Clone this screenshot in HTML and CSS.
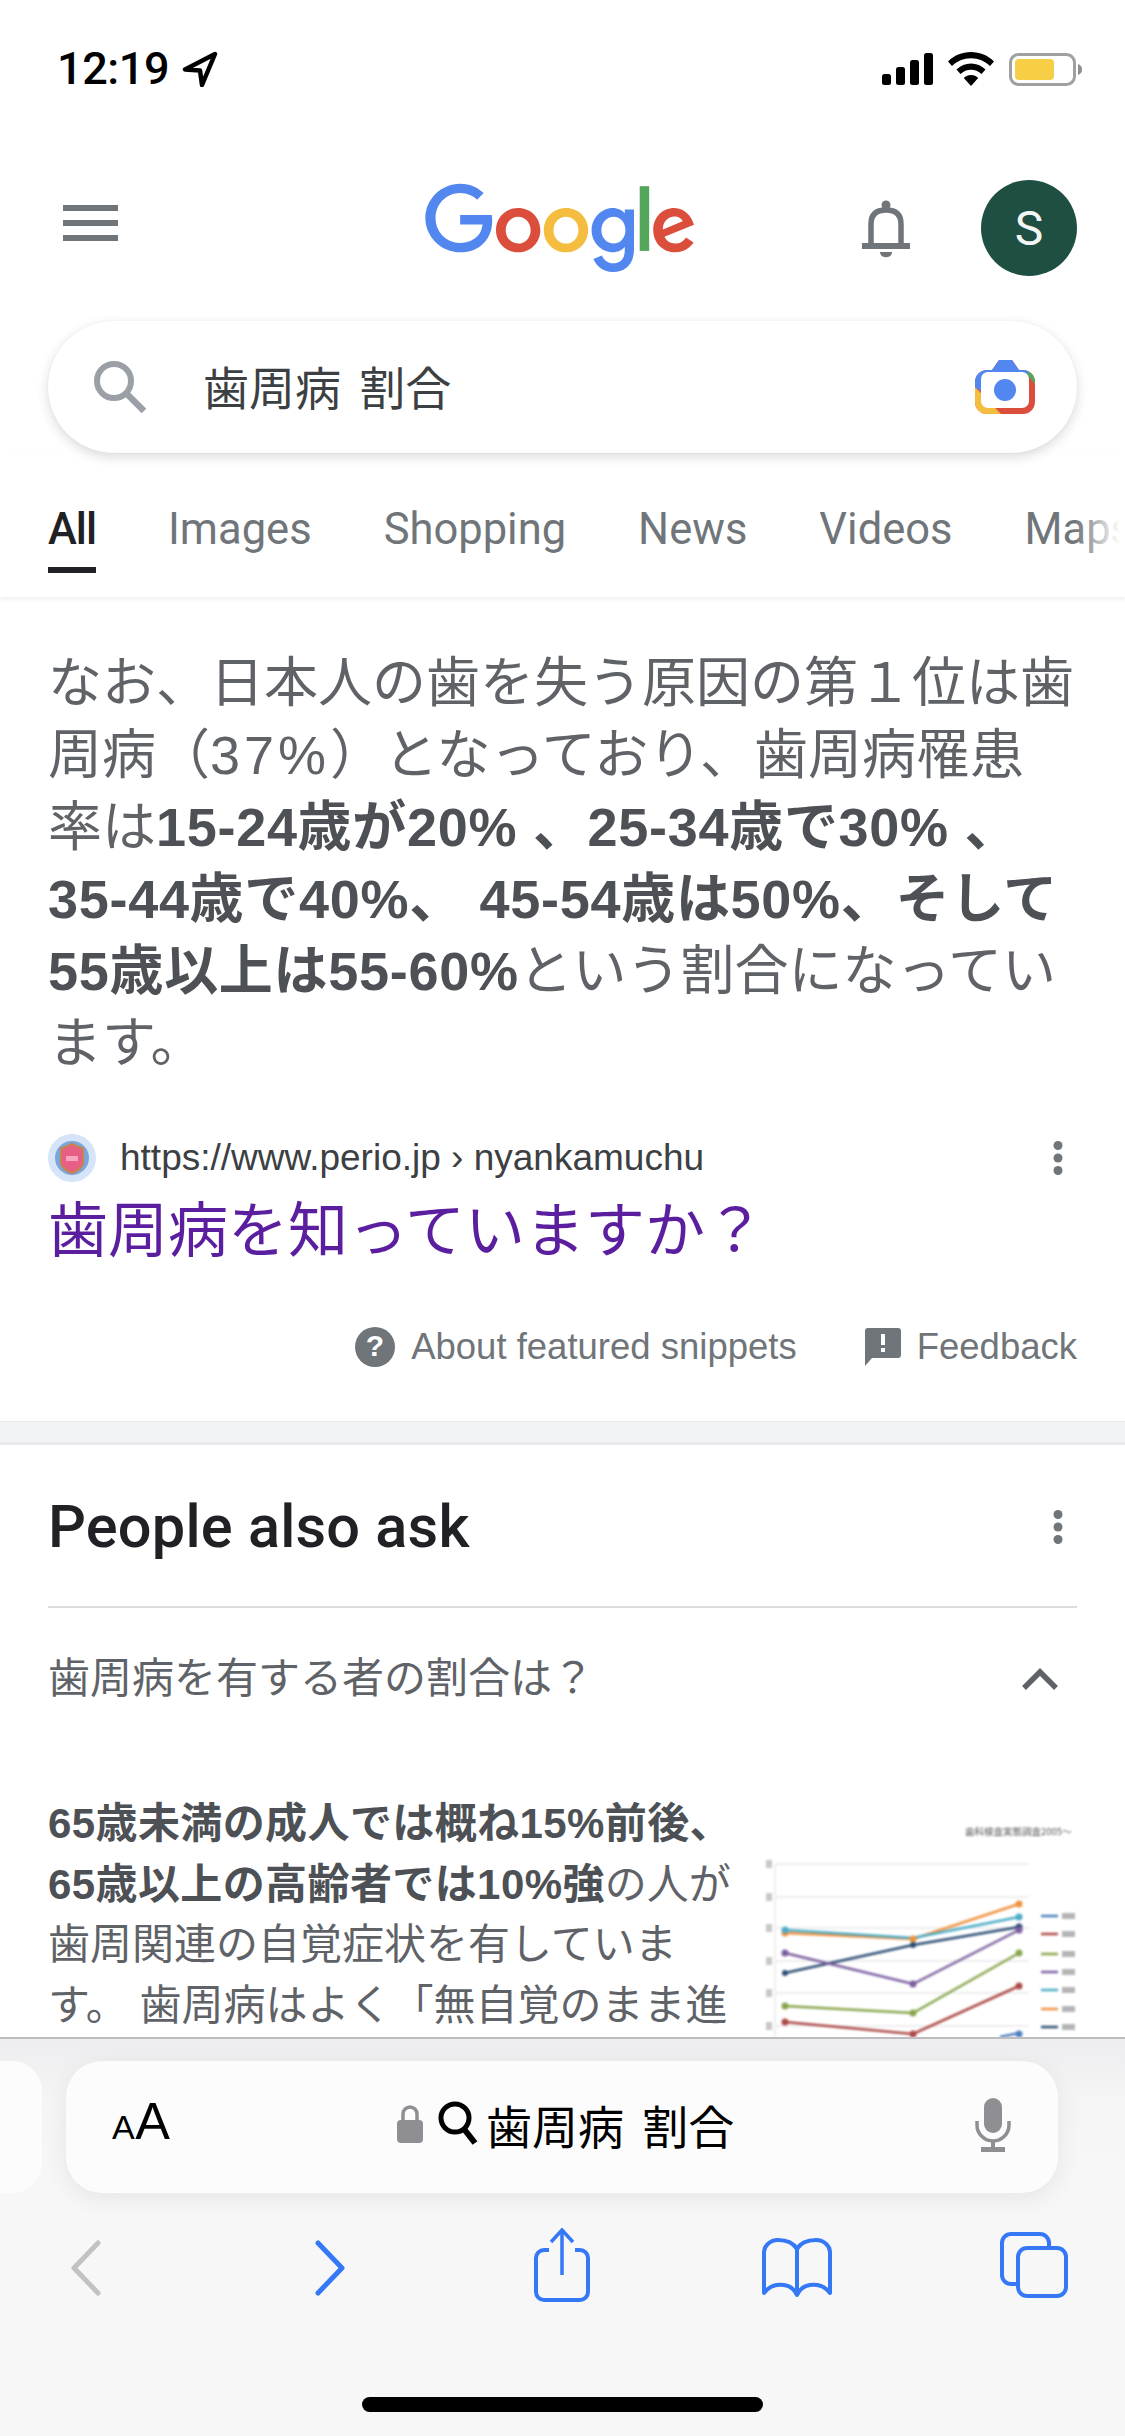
FILE: index.html
```html
<!DOCTYPE html>
<html lang="ja">
<head>
<meta charset="utf-8">
<title>歯周病 割合 - Google Search</title>
<link rel="stylesheet" href="styles.css">
</head>
<body>
<div class="page">
  <main class="main">
    <div class="status">
      <div class="status-left">
        <span class="time">12:19</span>
        <svg class="loc" viewBox="0 0 36 36"><path d="M33 3 L3 18.5 L18 19.5 L20 34 Z" fill="none" stroke="#000" stroke-width="4.5" stroke-linejoin="round"/></svg>
      </div>
      <div class="status-right">
        <svg class="signal" viewBox="0 0 51 32"><rect x="0" y="21" width="9" height="11" rx="2.5"/><rect x="14" y="14" width="9" height="18" rx="2.5"/><rect x="28" y="7" width="9" height="25" rx="2.5"/><rect x="42" y="0" width="9" height="32" rx="2.5"/></svg>
        <svg class="wifi" viewBox="0 0 46 34"><path d="M23 0 C32 0 40 3.500 46 9.500 L42 14 C37 9 30.500 6.200 23 6.200 C15.500 6.200 9 9 4 14 L0 9.500 C6 3.500 14 0 23 0 Z"/><path d="M23 11.500 C28.500 11.500 33.500 13.500 37.500 17.500 L33.500 22 C30.500 19.300 27 17.800 23 17.800 C19 17.800 15.500 19.300 12.500 22 L8.500 17.500 C12.500 13.500 17.500 11.500 23 11.500 Z"/><path d="M23 23 C25.800 23 28.300 24 30.200 25.900 L23 34 L15.800 25.900 C17.700 24 20.200 23 23 23 Z"/></svg>
        <svg class="battery" viewBox="0 0 73 33"><rect x="1.500" y="1.500" width="64" height="30" rx="8" fill="none" stroke="#a0a0a0" stroke-width="3"/><rect x="6" y="6" width="39" height="21" rx="4" fill="#f7cf47"/><path d="M69 11 C72 12 73 14 73 16.500 C73 19 72 21 69 22 Z" fill="#8e8e8e"/></svg>
      </div>
    </div>

    <header class="header">
      <div class="burger"><i></i><i></i><i></i></div>
      <svg class="logo" viewBox="0 0 272 92">
        <path fill="#DB4E3C" d="M115.75 47.18c0 12.77-9.99 22.18-22.25 22.18s-22.25-9.41-22.25-22.18C71.25 34.32 81.24 25 93.5 25s22.25 9.32 22.25 22.18zm-9.74 0c0-7.98-5.79-13.44-12.51-13.44S80.99 39.2 80.99 47.18c0 7.9 5.79 13.44 12.51 13.44s12.51-5.55 12.51-13.44z"/>
        <path fill="#F4BD3F" d="M163.75 47.18c0 12.77-9.99 22.18-22.25 22.18s-22.25-9.41-22.25-22.18c0-12.85 9.99-22.18 22.25-22.18s22.25 9.32 22.25 22.18zm-9.74 0c0-7.98-5.79-13.44-12.51-13.44s-12.51 5.46-12.51 13.44c0 7.9 5.79 13.44 12.51 13.44s12.51-5.55 12.51-13.44z"/>
        <path fill="#5287EF" d="M209.75 26.34v39.82c0 16.38-9.66 23.07-21.08 23.07-10.75 0-17.22-7.19-19.66-13.07l8.48-3.53c1.51 3.61 5.21 7.87 11.17 7.87 7.31 0 11.84-4.51 11.84-13v-3.19h-.34c-2.18 2.69-6.38 5.04-11.68 5.04-11.09 0-21.25-9.66-21.25-22.09 0-12.52 10.16-22.26 21.25-22.26 5.29 0 9.49 2.35 11.68 4.96h.34v-3.61h9.25zm-8.56 20.92c0-7.81-5.21-13.52-11.84-13.52-6.72 0-12.35 5.71-12.35 13.52 0 7.73 5.63 13.36 12.35 13.36 6.63 0 11.84-5.63 11.84-13.36z"/>
        <path fill="#55A65D" d="M225 3v65h-9.500V3h9.500z"/>
        <path fill="#DB4E3C" d="M262.02 54.48l7.56 5.04c-2.44 3.61-8.32 9.83-18.48 9.83-12.6 0-22.01-9.74-22.01-22.18 0-13.19 9.49-22.18 20.92-22.18 11.51 0 17.14 9.16 18.98 14.11l1.01 2.52-29.65 12.28c2.27 4.45 5.8 6.72 10.75 6.72 4.96 0 8.4-2.44 10.92-6.14zm-23.27-7.98l19.82-8.23c-1.09-2.77-4.37-4.7-8.23-4.7-4.95 0-11.84 4.37-11.59 12.93z"/>
        <path fill="#5287EF" d="M35.29 41.41V32H67c.31 1.64.47 3.58.47 5.68 0 7.06-1.93 15.79-8.15 22.01-6.05 6.3-13.78 9.66-24.02 9.66C16.32 69.35.36 53.89.36 34.91.36 15.93 16.32.47 35.3.47c10.5 0 17.98 4.12 23.6 9.49l-6.64 6.64c-4.03-3.78-9.49-6.72-16.97-6.72-13.86 0-24.7 11.17-24.7 25.03 0 13.86 10.84 25.03 24.7 25.03 8.99 0 14.11-3.61 17.39-6.89 2.66-2.66 4.41-6.46 5.1-11.65l-22.49.01z"/>
      </svg>
      <svg class="bell" viewBox="0 0 50 58"><circle cx="25" cy="5" r="4.500" fill="#70757a"/><path d="M10 43 V24 C10 14 16 10 25 10 C34 10 40 14 40 24 V43" fill="none" stroke="#70757a" stroke-width="5.500"/><rect x="1" y="43" width="48" height="6" fill="#70757a"/><path d="M19 52 H31 C31 59 19 59 19 52 Z" fill="#70757a"/></svg>
      <div class="avatar">S</div>
    </header>

    <div class="searchbar">
      <svg class="search-icon" viewBox="0 0 54 54"><circle cx="21" cy="21" r="17" fill="none" stroke="#9aa0a6" stroke-width="6"/><path d="M33 33 L51 51" stroke="#9aa0a6" stroke-width="6.500"/></svg>
      <span class="query">歯周病 割合</span>
      <svg class="camera" viewBox="0 0 60 54">
        <defs><clipPath id="cam"><path d="M12 10 H17 L24 0 H37 L44 10 H48 A12 12 0 0 1 60 22 V42 A12 12 0 0 1 48 54 H12 A12 12 0 0 1 0 42 V22 A12 12 0 0 1 12 10 Z"/></clipPath></defs>
        <g clip-path="url(#cam)">
          <rect x="0" y="0" width="60" height="54" fill="#DB4E3C"/>
          <path d="M0 27 L26 54 H0 Z" fill="#F4BD3F"/>
          <path d="M44 6 H60 V24 Z" fill="#55A65D"/>
          <path d="M0 0 H44 L54 14 H8 V33 L0 27 Z" fill="#5287EF"/>
        </g>
        <rect x="6" y="12" width="48" height="36" rx="7" fill="#fff"/>
        <circle cx="30" cy="30" r="11" fill="#5287EF"/>
      </svg>
    </div>

    <nav class="tabs">
      <span class="tab tab-active">All</span>
      <span class="tab">Images</span>
      <span class="tab">Shopping</span>
      <span class="tab">News</span>
      <span class="tab">Videos</span>
      <span class="tab">Maps</span>
    </nav>

    <p class="snippet">なお、日本人の歯を失う原因の第１位は歯<br>周病（<span class="pct">37%</span>）となっており、歯周病罹患<br>率は<b>15-24歳が20% 、25-34歳で30% 、<br>35-44歳で40%、 45-54歳は50%、そして<br>55歳以上は55-60%</b>という割合になってい<br>ます。</p>

    <div class="source">
      <svg class="favicon" viewBox="0 0 48 48">
        <circle cx="24" cy="24" r="24" fill="#d5e4f8"/>
        <circle cx="24" cy="24" r="17" fill="#7aa6da"/>
        <path d="M12 14 L24 9 L36 14 V28 C36 34 30 38 24 40 C18 38 12 34 12 28 Z" fill="#c8814f"/>
        <path d="M14 16 L24 11 L34 16 V28 C34 32 28 36 24 38 C20 36 14 32 14 28 Z" fill="#e85f86"/>
        <path d="M18 22 H30 V27 H18 Z" fill="#f3a6bd"/>
      </svg>
      <span class="url">https://www.perio.jp › nyankamuchu</span>
      <svg class="dots" viewBox="0 0 10 34"><circle cx="5" cy="4.500" r="4.500"/><circle cx="5" cy="17" r="4.500"/><circle cx="5" cy="29.500" r="4.500"/></svg>
    </div>
    <h3 class="result-title">歯周病を知っていますか？</h3>

    <div class="snippet-foot">
      <svg class="foot-q" viewBox="0 0 40 40"><circle cx="20" cy="20" r="20" fill="#70757a"/><text x="20" y="29" text-anchor="middle" class="foot-q-mark">?</text></svg>
      <span class="foot-text">About featured snippets</span>
      <svg class="foot-f" viewBox="0 0 36 38"><path d="M3 0 H33 A3 3 0 0 1 36 3 V27 A3 3 0 0 1 33 30 H7 L0 38 V3 A3 3 0 0 1 3 0 Z" fill="#70757a"/><rect x="16" y="6" width="4" height="11" fill="#fff"/><rect x="16" y="20" width="4" height="4" fill="#fff"/></svg>
      <span class="foot-text">Feedback</span>
    </div>

    <div class="band"></div>

    <section class="paa">
      <div class="paa-head">
        <h2 class="paa-title">People also ask</h2>
        <svg class="dots" viewBox="0 0 10 34"><circle cx="5" cy="4.500" r="4.500"/><circle cx="5" cy="17" r="4.500"/><circle cx="5" cy="29.500" r="4.500"/></svg>
      </div>
      <div class="paa-rule"></div>
      <div class="question">
        <span>歯周病を有する者の割合は？</span>
        <svg class="chev" viewBox="0 0 36 24"><path d="M2 21 L18 5 L34 21" fill="none" stroke="#5f6368" stroke-width="5.500"/></svg>
      </div>
      <div class="answer">
        <p class="answer-text"><b>65歳未満の成人では概ね15%前後、<br>65歳以上の高齢者では10%強</b>の人が<br>歯周関連の自覚症状を有していま<br>す。 歯周病はよく「無自覚のまま進</p>
        <svg class="chart" viewBox="763 1793 317 244">
          <g class="blur">
            <text x="965" y="1835" class="chart-title">歯科検査実態調査2005～</text>
            <g stroke="#eeeeee" stroke-width="2"><path d="M775 1864H1029M775 1897H1029M775 1928H1029M775 1961H1029M775 1993H1029M775 2026H1029M775 1864V2037"/></g>
            <g fill="#c8c8c8"><rect x="766" y="1860" width="6" height="8"/><rect x="766" y="1893" width="6" height="8"/><rect x="766" y="1924" width="6" height="8"/><rect x="766" y="1957" width="6" height="8"/><rect x="766" y="1989" width="6" height="8"/><rect x="766" y="2022" width="6" height="8"/></g>
            <g fill="none" stroke-width="2.500">
              <path d="M785 1933L913 1939L1019 1904" stroke="#f0913f"/>
              <path d="M785 1930L913 1938L1019 1917" stroke="#4bacc6"/>
              <path d="M785 1973L913 1945L1019 1927" stroke="#2c4d75"/>
              <path d="M785 1953L913 1984L1019 1930" stroke="#7d5fa0"/>
              <path d="M785 2006L913 2013L1019 1953" stroke="#89a64e"/>
              <path d="M785 2022L913 2034L1019 1986" stroke="#ad4a47"/>
              <path d="M1000 2037L1019 2033" stroke="#4f81bd"/>
              <path d="M1041 1916h17" stroke="#4f81bd"/><path d="M1041 1934h17" stroke="#ad4a47"/><path d="M1041 1954h17" stroke="#89a64e"/><path d="M1041 1972h17" stroke="#7d5fa0"/><path d="M1041 1990h17" stroke="#4bacc6"/><path d="M1041 2009h17" stroke="#f0913f"/><path d="M1041 2027h17" stroke="#2c4d75"/>
            </g>
            <g fill="#b4b4b4"><rect x="1062" y="1913" width="13" height="6"/><rect x="1062" y="1931" width="13" height="6"/><rect x="1062" y="1951" width="13" height="6"/><rect x="1062" y="1969" width="13" height="6"/><rect x="1062" y="1987" width="13" height="6"/><rect x="1062" y="2006" width="13" height="6"/><rect x="1062" y="2024" width="13" height="6"/></g>
            <g><circle cx="785" cy="1933" r="3.500" fill="#f0913f"/><circle cx="913" cy="1939" r="3.500" fill="#f0913f"/><circle cx="1019" cy="1904" r="3.500" fill="#f0913f"/><circle cx="1019" cy="1917" r="3.500" fill="#4bacc6"/><circle cx="785" cy="1930" r="3.500" fill="#4bacc6"/><circle cx="1019" cy="1927" r="3.500" fill="#2c4d75"/><circle cx="913" cy="1945" r="3" fill="#2c4d75"/><circle cx="785" cy="1973" r="3" fill="#2c4d75"/><circle cx="785" cy="1953" r="3.500" fill="#7d5fa0"/><circle cx="913" cy="1984" r="3.500" fill="#7d5fa0"/><circle cx="1019" cy="1930" r="3.500" fill="#7d5fa0"/><circle cx="785" cy="2006" r="3.500" fill="#89a64e"/><circle cx="913" cy="2013" r="3.500" fill="#89a64e"/><circle cx="1019" cy="1953" r="3.500" fill="#89a64e"/><circle cx="785" cy="2022" r="3.500" fill="#ad4a47"/><circle cx="913" cy="2034" r="3.500" fill="#ad4a47"/><circle cx="1019" cy="1986" r="3.500" fill="#ad4a47"/><circle cx="1019" cy="2034" r="3.500" fill="#4f81bd"/></g>
          </g>
        </svg>
      </div>
    </section>
  </main>

  <footer class="safari">
    <div class="address-row">
      <div class="prev-field"></div>
      <div class="address">
        <span class="aa"><small>A</small>A</span>
        <div class="addr-center">
          <svg class="lock" viewBox="0 0 26 38"><path d="M6 16 V9 A7 7 0 0 1 20 9 V16" fill="none" stroke="#8e8e93" stroke-width="3.500"/><rect x="0" y="15" width="26" height="23" rx="4" fill="#8e8e93"/></svg>
          <svg class="mag" viewBox="0 0 40 44"><circle cx="17" cy="17" r="14" fill="none" stroke="#000" stroke-width="5"/><path d="M26 28 L37 42" stroke="#000" stroke-width="6"/></svg>
          <span class="addr-text">歯周病 割合</span>
        </div>
        <svg class="mic" viewBox="0 0 36 54"><rect x="9" y="0" width="18" height="35" rx="9" fill="#8e8e93"/><path d="M2 23 V27 A16 16 0 0 0 34 27 V23" fill="none" stroke="#8e8e93" stroke-width="3.500"/><rect x="16" y="43" width="4" height="8" fill="#8e8e93"/><rect x="6" y="49" width="24" height="5" fill="#8e8e93"/></svg>
      </div>
    </div>
    <div class="toolbar">
      <svg class="tb tb-back" viewBox="0 0 30 56"><path d="M27 3 L3 28 L27 53" fill="none" stroke="#c2c2c4" stroke-width="5" stroke-linecap="round" stroke-linejoin="round"/></svg>
      <svg class="tb tb-fwd" viewBox="0 0 30 56"><path d="M3 3 L27 28 L3 53" fill="none" stroke="#3478f6" stroke-width="5" stroke-linecap="round" stroke-linejoin="round"/></svg>
      <svg class="tb tb-share" viewBox="0 0 56 74"><path d="M28 2 V47" fill="none" stroke="#3478f6" stroke-width="3.500"/><path d="M17 14 L28 2 L39 14" fill="none" stroke="#3478f6" stroke-width="3.500"/><path d="M15 22 H10 A8 8 0 0 0 2 30 V64 A8 8 0 0 0 10 72 H46 A8 8 0 0 0 54 64 V30 A8 8 0 0 0 46 22 H41" fill="none" stroke="#3478f6" stroke-width="4"/></svg>
      <svg class="tb tb-book" viewBox="0 0 70 60"><path d="M35 11 C31 4 24 2 16 2 C8 2 2 8 2 14 V55 C8 47 15 46 22 47 C28 48 33 52 35 57 C37 52 42 48 48 47 C55 46 62 47 68 55 V14 C68 8 62 2 54 2 C46 2 39 4 35 11 Z M35 11 V57" fill="none" stroke="#3478f6" stroke-width="4" stroke-linejoin="round"/></svg>
      <svg class="tb tb-tabs" viewBox="0 0 68 66"><path d="M16 52 H11 A9 9 0 0 1 2 43 V11 A9 9 0 0 1 11 2 H40 A9 9 0 0 1 49 11 V15" fill="none" stroke="#3478f6" stroke-width="4"/><rect x="18" y="16" width="48" height="48" rx="9" fill="none" stroke="#3478f6" stroke-width="4"/></svg>
    </div>
    <div class="home-indicator"></div>
  </footer>
</div>
</body>
</html>
```

FILE: styles.css
```css
* { box-sizing: border-box; }
html, body { margin: 0; padding: 0; background: #fff; }
body { font-family: "Liberation Sans", "Noto Sans CJK JP", sans-serif; color: #3c4043; }
.page { width: 1125px; height: 2436px; display: flex; flex-direction: column; overflow: hidden; }
.main { flex: 1 1 0; min-height: 0; overflow: hidden; background: #fff; }
p, h2, h3 { margin: 0; font-weight: 400; }

/* status bar */
.status { height: 104px; padding: 52px 43px 0 57px; display: flex; justify-content: space-between; align-items: flex-start; }
.status-left { display: flex; align-items: center; height: 34px; gap: 13px; }
.time { font-family: Roboto, sans-serif; font-weight: 500; font-size: 45px; line-height: 34px; color: #000; letter-spacing: -.4px; }
.loc { width: 36px; height: 36px; }
.status-right { display: flex; align-items: center; height: 34px; }
.signal { width: 51px; height: 32px; fill: #000; }
.wifi { width: 46px; height: 34px; margin-left: 15px; fill: #000; }
.battery { width: 73px; height: 33px; margin-left: 15px; }

/* header */
.header { margin-top: 76px; height: 96px; display: flex; align-items: center; }
.burger { width: 55px; margin-left: 63px; display: flex; flex-direction: column; gap: 9px; margin-top: -10px; }
.burger i { display: block; height: 6px; background: #70757a; }
.logo { width: 271px; height: 92px; margin-left: 307px; margin-top: 2px; }
.bell { width: 50px; height: 58px; margin-left: 165px; margin-top: 2px; }
.avatar { width: 96px; height: 96px; margin-left: 70px; border-radius: 50%; background: #1f4e43; color: #f4f6f5; font-family: Roboto, sans-serif; font-size: 48px; display: flex; align-items: center; justify-content: center; }

/* search */
.searchbar { margin: 45px 48px 0; height: 132px; border-radius: 66px; background: #fff; box-shadow: 0 4px 12px rgba(32,33,36,.16), 0 0 2px rgba(32,33,36,.05); display: flex; align-items: center; padding-left: 45px; padding-right: 42px; }
.search-icon { width: 54px; height: 54px; }
.query { margin-left: 56px; font-family: "Noto Sans CJK JP", sans-serif; font-size: 46px; line-height: 60px; color: #3c4043; flex: 1; white-space: nowrap; word-spacing: 8px; margin-top: -4px; }
.camera { width: 60px; height: 54px; }

/* tabs */
.tabs { height: 144px; padding: 0 0 0 48px; display: flex; gap: 72px; position: relative; box-shadow: 0 2px 4px rgba(32,33,36,.08); white-space: nowrap; overflow: hidden; align-items: flex-start; }
.tabs::after { content: ""; position: absolute; right: 0; top: 0; bottom: 4px; width: 50px; background: linear-gradient(to right, rgba(255,255,255,0), #fff 90%); }
.tab { font-family: Roboto, sans-serif; font-size: 43.5px; line-height: 50px; margin-top: 52px; height: 68px; color: #70757a; }
.tab-active { color: #202124; font-weight: 500; border-bottom: 6px solid #202124; letter-spacing: -1px; }

/* snippet */
.snippet { padding: 50px 0 0 48px; font-size: 54px; line-height: 72px; color: #5f6368; white-space: nowrap; }
.snippet b { font-weight: 700; color: #4d5156; letter-spacing: .7px; }
.pct { letter-spacing: 4px; }
.answer-text b { font-weight: 700; color: #4d5156; letter-spacing: .4px; }

.source { margin: 55px 48px 0; height: 48px; display: flex; align-items: center; }
.favicon { width: 48px; height: 48px; filter: blur(.6px); }
.url { margin-left: 24px; flex: 1; font-size: 37px; line-height: 48px; color: #3c4043; white-space: nowrap; }
.dots { width: 10px; height: 34px; fill: #70757a; margin-right: 14px; }
.result-title { margin: 14px 0 0 48px; font-size: 60px; line-height: 72px; color: #5a1e9f; white-space: nowrap; }

.snippet-foot { margin: 59px 48px 0 0; height: 40px; display: flex; align-items: center; justify-content: flex-end; }
.foot-q { width: 40px; height: 40px; }
.foot-q-mark { font-family: "Liberation Sans", sans-serif; font-weight: 700; font-size: 30px; fill: #fff; }
.foot-f { width: 36px; height: 38px; margin-left: 68px; }
.foot-text { margin-left: 16px; font-size: 36.5px; line-height: 40px; color: #70757a; white-space: nowrap; }

.band { margin-top: 54px; height: 24px; background: #f1f3f4; border-top: 1px solid #e8eaed; border-bottom: 3px solid #e8eaed; }

/* people also ask */
.paa { padding: 48px 48px 0; }
.paa-head { height: 68px; display: flex; align-items: center; justify-content: space-between; }
.paa-title { font-family: Roboto, sans-serif; font-weight: 500; font-size: 59.5px; line-height: 68px; color: #202124; letter-spacing: .2px; }
.paa-rule { margin-top: 45px; height: 2px; background: #dadce0; }
.question { margin-top: 41px; height: 60px; display: flex; align-items: center; justify-content: space-between; font-size: 42px; line-height: 60px; color: #5f6368; }
.chev { width: 36px; height: 24px; margin-right: 19px; }
.answer { margin-top: 85px; display: flex; position: relative; }
.answer-text { font-size: 42px; line-height: 60.6px; color: #5f6368; white-space: nowrap; width: 715px; flex: none; }
.chart { width: 317px; height: 244px; flex: none; margin-top: -1px; }
.blur { filter: blur(1.3px); }
.chart-title { font-family: "Noto Sans CJK JP", sans-serif; font-size: 9.500px; fill: #555; }

/* Safari chrome */
.safari { height: 399px; flex: none; border-top: 2px solid #bdbdbf; background: linear-gradient(to bottom, #ededef 0, #f5f5f6 60px, #f7f7f8 170px); display: flex; flex-direction: column; position: relative; }
.address-row { margin-top: 22px; display: flex; gap: 24px; }
.prev-field { width: 42px; height: 132px; background: #fcfcfc; border-radius: 0 30px 30px 0; flex: none; }
.address { width: 992px; height: 132px; background: #fcfcfc; border-radius: 36px; box-shadow: 0 6px 24px rgba(0,0,0,.07); display: flex; align-items: center; position: relative; padding: 0 47px 0 46px; justify-content: space-between; }
.aa { font-family: "Liberation Sans", sans-serif; font-size: 52px; line-height: 50px; color: #000; letter-spacing: .5px; margin-top: -6px; }
.aa small { font-size: 34px; }
.addr-center { position: absolute; left: 331px; top: 0; bottom: 0; display: flex; align-items: center; }
.lock { width: 26px; height: 38px; margin-top: -6px; }
.mag { width: 40px; height: 44px; margin-left: 15px; margin-top: -8px; }
.addr-text { margin-left: 8px; font-family: "Noto Sans CJK JP", sans-serif; font-size: 46px; line-height: 60px; color: #000; margin-top: -6px; white-space: nowrap; word-spacing: 8px; }
.mic { width: 36px; height: 54px; margin-top: -4px; }

.toolbar { margin-top: 35px; display: grid; grid-template-columns: 172px 316px 148px 322px 152px; justify-items: center; align-items: start; height: 76px; }
.tb { display: block; }
.tb-back, .tb-fwd { width: 30px; height: 56px; margin-top: 12px; }
.tb-share { width: 56px; height: 74px; }
.tb-book { width: 70px; height: 60px; margin-top: 10px; }
.tb-tabs { width: 68px; height: 66px; margin-top: 4px; }

.home-indicator { position: absolute; left: 362px; top: 358px; width: 401px; height: 15px; background: #000; border-radius: 8px; }
```
